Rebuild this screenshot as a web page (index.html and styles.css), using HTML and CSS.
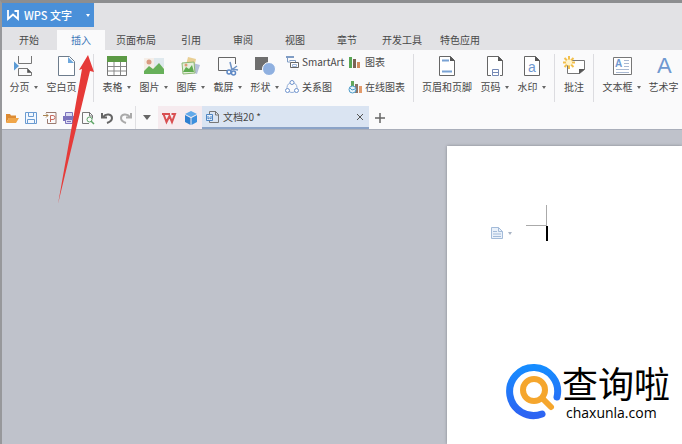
FILE: index.html
```
<!DOCTYPE html>
<html lang="zh-CN">
<head>
	<meta charset="UTF-8">
	<title>WPS 文字</title>
	<link rel="stylesheet" href="styles.css">
</head>
<body>
	<!-- 标题栏 -->
	<header class="titlebar">
		<button class="app-menu">
			<svg width="14" height="12" viewBox="0 0 14 12" fill="none" stroke="#fff" stroke-width="1.800"><path d="M2 1v9l5-4.500L12 10V2H8.500"/></svg>
			<span class="app-name">WPS 文字</span>
			<i class="caret"></i>
		</button>
	</header>

	<!-- 选项卡 -->
	<nav class="tabs">
		<button class="tab">开始</button>
		<button class="tab active">插入</button>
		<button class="tab wide">页面布局</button>
		<button class="tab">引用</button>
		<button class="tab">审阅</button>
		<button class="tab">视图</button>
		<button class="tab">章节</button>
		<button class="tab wide">开发工具</button>
		<button class="tab wide">特色应用</button>
	</nav>

	<!-- 功能区 -->
	<div class="ribbon">
		<div class="group">
			<button class="tool">
				<svg width="22" height="22" viewBox="0 0 22 22" fill="none" stroke="#777" stroke-width="1"><path d="M5.500 1v7.500h13V1M5.500 21v-7.500h9l4 4V20.500h-13"/><path d="M14.500 13.500v4h4z" fill="#555"/><path d="M1 6.500l5 4.500-5 4.500z" fill="#5b9bd5" stroke="none"/></svg>
				<span class="label">分页<i class="caret"></i></span>
			</button>
			<button class="tool medium">
				<svg width="22" height="22" viewBox="0 0 22 22"><path d="M3.500 1.500h11l5 5v14h-16z" fill="#fff" stroke="#6d7c8c"/><path d="M13 2l6 6h-6z" fill="#6fa8dc"/></svg>
				<span class="label">空白页<i class="caret"></i></span>
			</button>
		</div>
		<div class="group">
			<button class="tool">
				<svg width="22" height="22" viewBox="0 0 22 22"><path d="M1.500 2.500h19v18h-19z" fill="#fff" stroke="#777"/><path d="M1 1h20v6H1z" fill="#5c9a45"/><path d="M8 7v13M14.500 7v13M2 11.500h18M2 16h18" stroke="#888" fill="none"/></svg>
				<span class="label">表格<i class="caret"></i></span>
			</button>
			<button class="tool">
				<svg width="22" height="22" viewBox="0 0 22 22"><path d="M1 3h20v16H1z" fill="#f5eee8"/><path d="M11 3h10v9H11z" fill="#dfe9ee"/><circle cx="6" cy="7" r="2.500" fill="#d99a80"/><path d="M1 19v-3l5-5 4 3 6-6 5 6v5z" fill="#67b05a"/></svg>
				<span class="label">图片<i class="caret"></i></span>
			</button>
			<button class="tool">
				<svg width="22" height="22" viewBox="0 0 22 22"><path d="M8 2l8 2-2 9-8-3z" fill="#e9cf94"/><path d="M13 8l7 2-3 9-6-2z" fill="#b5bfd8"/><path d="M2 8l12-1 1 11-12 1z" fill="#e5efdc" stroke="#8cb873"/><path d="M3 17l3-5 3 2 3-4 2 7z" fill="#5fab50"/><circle cx="6" cy="10" r="1.500" fill="#df9c76"/></svg>
				<span class="label">图库<i class="caret"></i></span>
			</button>
			<button class="tool">
				<svg width="22" height="22" viewBox="0 0 22 22" fill="none"><path d="M10 15.500H1.500v-13h17V9" stroke="#666"/><path d="M13 7l2 8M20 11l-7 5" stroke="#6f93c5" stroke-width="1.500"/><circle cx="12" cy="17" r="2" stroke="#5d88c5" stroke-width="1.500"/><circle cx="16.500" cy="18" r="2" stroke="#5d88c5" stroke-width="1.500"/><path d="M15 14l6 1" stroke="#6f93c5" stroke-width="1.500"/></svg>
				<span class="label">截屏<i class="caret"></i></span>
			</button>
			<button class="tool">
				<svg width="22" height="22" viewBox="0 0 22 22"><path d="M1 2h13v13H1z" fill="#6e6e6e"/><circle cx="15" cy="14" r="6.500" fill="#8fb0e0" stroke="#fff" stroke-width="1"/></svg>
				<span class="label">形状<i class="caret"></i></span>
			</button>
			<div class="stack first">
				<button class="line-tool">
					<svg width="14" height="14" viewBox="0 0 14 14" fill="#fff"><path d="M1 2.500h8M1 1.500h8M2.500 3v4h3" stroke="#7f9cc4" fill="none"/><path d="M4.500 5.500h6v4" stroke="#7f9cc4"/><path d="M5.500 7.500h8v5h-8z" stroke="#666"/><path d="M7.500 9.500h4v2h-4z" stroke="#9db4d6"/></svg>
					SmartArt
				</button>
				<button class="line-tool">
					<svg width="14" height="14" viewBox="0 0 14 14" fill="#fff"><circle cx="7" cy="7.500" r="5" stroke="#93aed8" fill="none"/><circle cx="7" cy="2.500" r="2" stroke="#6f93cd"/><circle cx="2.500" cy="10.500" r="2" stroke="#6f93cd"/><circle cx="11.500" cy="10.500" r="2" stroke="#6f93cd"/></svg>
					关系图
				</button>
			</div>
			<div class="stack second">
				<button class="line-tool">
					<svg width="14" height="14" viewBox="0 0 14 14"><path d="M1 2h3v11H1z" fill="#58a555"/><path d="M5 4h3v9H5z" fill="#796457"/><path d="M9 7h3v6H9z" fill="#d08a5e"/></svg>
					图表
				</button>
				<button class="line-tool">
					<svg width="14" height="14" viewBox="0 0 14 14"><path d="M3 1h3v7H3z" fill="#62a85b"/><path d="M7 4h3v9H7z" fill="#8b7469"/><path d="M11 6h3v7h-3z" fill="#e39b6b"/><circle cx="4.500" cy="9.500" r="3.500" fill="#e8f4fb" stroke="#4e9cc9"/><path d="M2 8l2 2 3-1" stroke="#4e9cc9" fill="none"/></svg>
					在线图表
				</button>
			</div>
		</div>
		<div class="group">
			<button class="tool large">
				<svg width="22" height="22" viewBox="0 0 22 22"><path d="M3.500 1.500h11l4 4v15h-15z" fill="#fff" stroke="#666"/><path d="M14 1v5h5z" fill="#555"/><path d="M6 5.500h7M6 16.500h10" stroke="#79a2d4" stroke-width="2"/></svg>
				<span class="label">页眉和页脚</span>
			</button>
			<button class="tool">
				<svg width="22" height="22" viewBox="0 0 22 22"><path d="M7 20.500H3.500v-19h11l4 4v15H16" fill="#fff" stroke="#666"/><path d="M14 1v5h5z" fill="#555"/><path d="M8.500 14.500h6v6h-6zM8 17.500h7" fill="none" stroke="#7589b5"/></svg>
				<span class="label">页码<i class="caret"></i></span>
			</button>
			<button class="tool">
				<svg width="22" height="22" viewBox="0 0 22 22"><path d="M3.500 1.500h11l4 4v15h-15z" fill="#fff" stroke="#666"/><path d="M14 1v5h5z" fill="#555"/><text class="glyph small" x="7" y="17">a</text></svg>
				<span class="label">水印<i class="caret"></i></span>
			</button>
		</div>
		<div class="group">
			<button class="tool narrow">
				<svg width="22" height="22" viewBox="0 0 22 22"><path d="M4.500 5.500h17v9l-5 4h-12z" fill="#fff" stroke="#777"/><path d="M16 19v-5h6z" fill="#555"/><path d="M6 1v13M0 7.500h12M1.500 3l9 9M10.500 3l-9 9" stroke="#f2c04c" stroke-width="2"/><circle cx="6" cy="7.500" r="3" fill="#fff4cd"/></svg>
				<span class="label">批注</span>
			</button>
		</div>
		<div class="group">
			<button class="tool medium">
				<svg width="22" height="22" viewBox="0 0 22 22"><path d="M2.500 2.500h18v17h-18z" fill="#fff" stroke="#777"/><text class="glyph tiny" x="4" y="12">A</text><path d="M13 5.500h5M13 8.500h5M13 11.500h5M5 14.500h13M5 17.500h13" stroke="#a9b9d2"/></svg>
				<span class="label">文本框<i class="caret"></i></span>
			</button>
			<button class="tool">
				<svg width="22" height="22" viewBox="0 0 22 22"><text class="glyph big" x="4" y="18">A</text></svg>
				<span class="label">艺术字</span>
			</button>
		</div>
	</div>

	<!-- 快速访问工具栏 + 文档标签 -->
	<div class="quickbar">
		<div class="quick">
			<button class="q" aria-label="打开"><svg width="14" height="14" viewBox="0 0 14 14"><path d="M1 12V3h4l1 1.500h5V7H4z" fill="#dd8b33"/><path d="M4 7h10l-3 5H1z" fill="#f0a64a"/></svg></button>
			<button class="q" aria-label="保存"><svg width="14" height="14" viewBox="0 0 14 14" fill="#f3f8fe" stroke="#6a9bd1"><path d="M1.500 1.500h11v11h-11z"/><path d="M4.500 1.500h5v4h-5zM3.500 8.500h7v4h-7z"/></svg></button>
			<button class="q" aria-label="输出为PDF"><svg width="14" height="14" viewBox="0 0 14 14" fill="none"><path d="M3 1.500h10v11H4.500V8" stroke="#9a7b70"/><path d="M7.500 11V4.500h2.500a1.500 1.500 0 0 1 0 4H7" stroke="#c76b5f"/><path d="M0 4.500h5M3 2.500l2 2-2 2" stroke="#a98350"/></svg></button>
			<button class="q" aria-label="打印"><svg width="14" height="14" viewBox="0 0 14 14"><path d="M1 5h12v5H1z" fill="#7c74bd"/><path d="M3.500 1.500h7v4h-7zM3.500 8.500h7v4h-7z" fill="#dcdcf3" stroke="#7c74bd"/><path d="M5 10.500h4" stroke="#7c74bd"/></svg></button>
			<button class="q" aria-label="打印预览"><svg width="14" height="14" viewBox="0 0 14 14" fill="none"><path d="M8 12.500H1.500v-11h7l3 3v3" stroke="#777"/><path d="M8.500 1v4H12" stroke="#777"/><circle cx="8.500" cy="8.500" r="2.500" stroke="#5da565"/><path d="M10 10l3 3" stroke="#5da565" stroke-width="1.500"/></svg></button>
			<button class="q" aria-label="撤销"><svg width="14" height="14" viewBox="0 0 14 14" fill="none" stroke="#666" stroke-width="2"><path d="M2 2v4.500h5M3 6c3-4 9-3 9 1 0 2-2 4-5 5"/></svg></button>
			<button class="q" aria-label="恢复"><svg width="14" height="14" viewBox="0 0 14 14" fill="none" stroke="#aaa" stroke-width="2"><path d="M12 2v4.500H7M11 6C8 2 2 3 2 7c0 2 2 4 5 5"/></svg></button>
		</div>
		<button class="more" aria-label="自定义"><i class="caret large"></i></button>
		<button class="q pink" aria-label="WPS"><svg width="14" height="14" viewBox="0 0 14 14" fill="none" stroke="#d94f52" stroke-width="2"><path d="M0 3h8M1.500 3l3 8L7.500 5l2.500 6 3-8H9.500"/></svg></button>
		<button class="q pink" aria-label="应用"><svg width="14" height="14" viewBox="0 0 14 14"><path d="M7 0l6 3-6 3-6-3z" fill="#63a9ea"/><path d="M1 4l5.500 3v7L1 11z" fill="#2f7fd1"/><path d="M13 4L7.500 7v7l5.500-3z" fill="#3f8fdd"/></svg></button>
		<div class="doc-tab">
			<svg width="13" height="14" viewBox="0 0 13 14" fill="none"><path d="M3.500 4V1.500h6l3 3v8h-9V11" stroke="#777"/><path d="M9.500 1v4H13" stroke="#777"/><path d="M.500 4.500h6v6h-6z" fill="#e6effb" stroke="#4f86c4"/><path d="M2 6v3l1.500-1L5 9V6" stroke="#4f86c4"/></svg>
			<span class="doc-name">文档20 *</span>
			<button class="close" aria-label="关闭"><svg width="8" height="8" viewBox="0 0 8 8" stroke="#555"><path d="M1 1l6 6M7 1L1 7"/></svg></button>
		</div>
		<button class="q add" aria-label="新建"><svg width="12" height="12" viewBox="0 0 12 12" stroke="#666" stroke-width="1.500"><path d="M6 1v10M1 6h10"/></svg></button>
	</div>

	<!-- 编辑区 -->
	<main class="canvas">
		<div class="page">
			<button class="para-menu" aria-label="段落">
				<svg width="12" height="14" viewBox="0 0 12 14" fill="#eaf1fa" stroke="#a3bbd9"><path d="M.500 1.500h7l4 4v7H.500z"/><path d="M7.500 1.500v4h4M2 5.500h4M2 8h8M2 10.500h8" fill="none"/></svg>
				<i class="caret"></i>
			</button>
			<div class="cursor-box">
				<div class="margin-mark"></div>
				<div class="cursor"></div>
			</div>
		</div>
	</main>

	<!-- 指向“插入”的箭头 -->
	<svg class="pointer" width="40" height="152" viewBox="0 0 40 152"><path d="M35 2L26 17l3-1L5 151 37 18l4 1z" fill="#e63a38"/></svg>

	<!-- 水印 -->
	<div class="brand">
		<svg width="56" height="56" viewBox="0 0 56 56" fill="none" stroke-linecap="round"><defs><linearGradient id="ring" x1="0" y1="0" x2="0" y2="1"><stop offset="0" stop-color="#168cff"/><stop offset="1" stop-color="#2d63f2"/></linearGradient></defs><path d="M51 34A24 24 0 1 0 36 51" stroke="url(#ring)" stroke-width="7"/><circle cx="28" cy="27" r="11" stroke="#f5a62d" stroke-width="6"/><path d="M37 36l8 8" stroke="#f5a62d" stroke-width="6"/></svg>
		<div class="brand-text">
			<span class="brand-name">查询啦</span>
			<span class="brand-url">chaxunla.com</span>
		</div>
	</div>
</body>
</html>
```
FILE: styles.css
```
*{margin: 0;padding: 0;box-sizing: border-box;}
body{min-height: 100vh;display: flex;flex-direction: column;position: relative;overflow: hidden;border-top: 3px solid #8d8e90;border-left: 2px solid #97989b;background: #e2e2e5;color: #484848;font: 10px/14px "Noto Sans CJK SC",sans-serif;}
button{border: 0;background: none;color: inherit;font: inherit;white-space: nowrap;cursor: pointer;}
svg{display: block;flex: none;overflow: visible;}

.caret{flex: none;width: 0;height: 0;border: 2px solid transparent;border-top: 3px solid #666;border-bottom: 0;}
.caret.large{border-width: 4px;border-top-width: 5px;border-bottom: 0;}

/* 标题栏 */
.titlebar{display: flex;height: 24px;}
.app-menu{display: flex;align-items: center;gap: 4px;width: 92px;padding: 0 4px;background: #4a90d9;color: #fff;font-size: 11px;font-weight: 500;}
.app-name{flex: 1;text-align: left;}
.app-menu .caret{border-top-color: #fff;}

/* 选项卡 */
.tabs{display: flex;height: 23px;padding: 3px 1px 0;}
.tab{width: 52px;border: 0 solid transparent;border-width: 0 2px;background-clip: padding-box;}
.tab.wide{width: 58px;}
.tab.active{background-color: #fafafb;color: #3a76b8;}

/* 功能区 */
.ribbon{display: flex;height: 56px;padding: 4px 0 0 3px;overflow: hidden;background: #fafafb;}
.group{display: flex;flex: none;height: 48px;}
.group + .group{margin-left: 4px;padding-left: 4px;border-left: 1px solid #dcdce0;}
.tool{display: flex;flex-direction: column;align-items: center;gap: 3px;flex: none;width: 37px;padding-top: 1px;}
.tool.narrow{width: 30px;}
.tool.medium{width: 47px;}
.tool.large{width: 58px;}
.label{display: flex;align-items: center;gap: 4px;}
.stack{display: flex;flex-direction: column;gap: 9px;}
.stack.first{width: 65px;padding-left: 2px;}
.stack.second{width: 61px;}
.line-tool{display: flex;align-items: center;gap: 3px;height: 16px;}
.glyph{fill: #6f98d0;font-family: "Liberation Sans",sans-serif;}
.glyph.tiny{font-size: 10px;font-weight: 700;}
.glyph.small{font-size: 14px;}
.glyph.big{font-size: 22px;}

/* 快速访问工具栏 */
.quickbar{display: flex;height: 24px;background: #fafafb;border-bottom: 1px solid #a9aeba;}
.quick{display: flex;width: 134px;border-right: 1px solid #e0e0e3;}
.q{display: flex;align-items: center;justify-content: center;flex: 1;}
.more{display: flex;align-items: center;justify-content: center;width: 22px;}
.q.pink{flex: none;width: 22px;background: #f6ebef;}
.q.add{flex: none;width: 22px;}
.doc-tab{display: flex;align-items: center;gap: 4px;width: 167px;padding: 0 4px;background: #dae4f2;border-bottom: 2px solid #8ba3c7;}
.doc-name{flex: 1;}
.close{padding: 1px;}

/* 编辑区 */
.canvas{flex: 1;display: grid;grid-template-columns: 445px 1fr;padding-top: 16px;background: #bfc2cb;}
.page{grid-column: 2;display: flex;align-items: flex-start;gap: 14px;padding: 59px 0 0 44px;background: #fff;box-shadow: 0 0 3px #85878d;}
.para-menu{display: flex;align-items: center;gap: 5px;margin-top: 21px;}
.para-menu .caret{border-top-color: #a9b4c4;}
.cursor-box{width: 22px;}
.margin-mark{width: 21px;height: 21px;border-right: 1px solid #aaa;border-bottom: 1px solid #aaa;}
.cursor{width: 2px;height: 15px;margin-left: auto;background: #000;}

.pointer{position: absolute;left: 51px;top: 50px;pointer-events: none;}

.brand{position: absolute;right: 12px;bottom: 22px;display: flex;align-items: center;color: #000;}
.brand-text{display: flex;flex-direction: column;align-items: flex-start;}
.brand-name{font-size: 36px;line-height: 44px;}
.brand-url{padding-left: 4px;font: 14px/18px "Open Sans",sans-serif;}
```
